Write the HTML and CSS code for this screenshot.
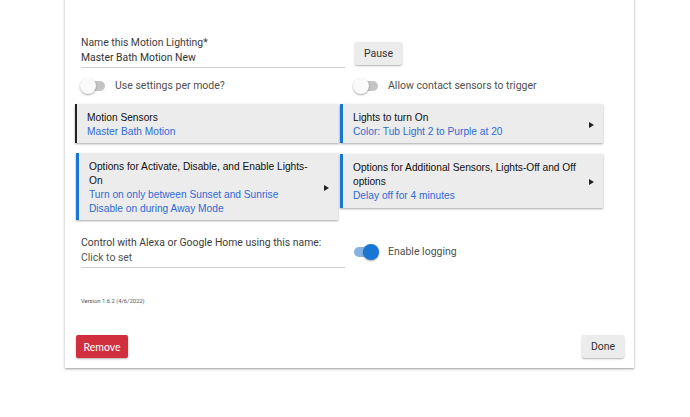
FILE: index.html
```html
<!DOCTYPE html>
<html>
<head>
<meta charset="utf-8">
<link rel="stylesheet" href="styles.css">
</head>
<body>
<div class="panel">
  <div class="row two">
    <div class="field">
      <div class="field-label">Name this Motion Lighting*</div>
      <div class="field-value">Master Bath Motion New</div>
    </div>
    <div class="right-col top">
      <button class="btn btn-grey btn-pause">Pause</button>
    </div>
  </div>

  <div class="row two toggles">
    <div class="toggle-line">
      <span class="switch"><span class="knob"></span></span>
      <span class="toggle-label">Use settings per mode?</span>
    </div>
    <div class="toggle-line">
      <span class="switch"><span class="knob"></span></span>
      <span class="toggle-label">Allow contact sensors to trigger</span>
    </div>
  </div>

  <div class="cards cards-1">
    <div class="tile tile-dark">
      <div class="tile-body">
        <div class="tile-title">Motion Sensors</div>
        <div class="tile-sub">Master Bath Motion</div>
      </div>
    </div>
    <div class="tile">
      <div class="tile-body">
        <div class="tile-title">Lights to turn On</div>
        <div class="tile-sub">Color: Tub Light 2 to Purple at 20</div>
      </div>
      <span class="arrow"></span>
    </div>
  </div>

  <div class="cards cards-2">
    <div class="tile tile-inset">
      <div class="tile-body">
        <div class="tile-title">Options for Activate, Disable, and Enable Lights-On</div>
        <div class="tile-sub">Turn on only between Sunset and Sunrise</div>
        <div class="tile-sub">Disable on during Away Mode</div>
      </div>
      <span class="arrow"></span>
    </div>
    <div class="tile tile-lower">
      <div class="tile-body">
        <div class="tile-title">Options for Additional Sensors, Lights-Off and Off options</div>
        <div class="tile-sub">Delay off for 4 minutes</div>
      </div>
      <span class="arrow"></span>
    </div>
  </div>

  <div class="row two alexa">
    <div class="field">
      <div class="field-label">Control with Alexa or Google Home using this name:</div>
      <div class="field-value placeholder">Click to set</div>
    </div>
    <div class="toggle-line">
      <span class="switch on"><span class="knob"></span></span>
      <span class="toggle-label">Enable logging</span>
    </div>
  </div>

  <div class="version">Version 1.6.2 (4/6/2022)</div>

  <div class="actions">
    <button class="btn btn-red">Remove</button>
    <button class="btn btn-grey btn-done">Done</button>
  </div>
</div>
</body>
</html>
```

FILE: styles.css
```css
html, body {
  margin: 0;
  padding: 0;
  background: #ffffff;
}

body {
  font-family: Roboto, "Liberation Sans", sans-serif;
  width: 690px;
  height: 417px;
  overflow: hidden;
}

.panel {
  margin-left: 65px;
  margin-top: -10px;
  width: 569px;
  box-sizing: border-box;
  padding: 45px 10px 10px 10px;
  background: #fff;
  box-shadow: 0 1px 3px rgba(0, 0, 0, 0.28), 0 1px 1px rgba(0, 0, 0, 0.12);
}

.row {
  padding-left: 6px;
}

.two {
  display: grid;
  grid-template-columns: 264px 1fr;
  column-gap: 9px;
}

.field {
  border-bottom: 1px solid #cfcfcf;
  padding-bottom: 1px;
}

.field-label {
  font-size: 10.4px;
  line-height: 15px;
  color: #3d3d3d;
}

.field-value {
  font-size: 10.4px;
  line-height: 16px;
  color: #333;
}

.field-value.placeholder {
  color: #555;
}

.right-col.top {
  align-self: start;
}

.btn {
  border: none;
  border-radius: 2px;
  font-family: Roboto, "Liberation Sans", sans-serif;
  font-size: 10.5px;
  height: 23px;
  padding: 0;
  cursor: pointer;
}

.btn-grey {
  background: #ececec;
  color: #333;
  box-shadow: 0 1px 2px rgba(0, 0, 0, 0.3);
}

.btn-pause {
  margin-top: 7px;
  margin-left: 1px;
  width: 47px;
}

.toggles {
  margin-top: 9px;
  height: 18px;
  align-items: center;
}

.toggle-line {
  display: flex;
  align-items: center;
  gap: 10px;
}

.switch {
  position: relative;
  display: inline-block;
  width: 24px;
  height: 10px;
  border-radius: 5px;
  background: #c4c4c4;
  flex: none;
}

.switch .knob {
  position: absolute;
  top: -3px;
  left: -1px;
  width: 16px;
  height: 16px;
  border-radius: 50%;
  background: #fafafa;
  box-shadow: 0 1px 2px rgba(0, 0, 0, 0.35);
}

.switch.on {
  background: #86b3e4;
}

.switch.on .knob {
  left: 9px;
  background: #1976d2;
}

.toggle-label {
  font-size: 10.5px;
  color: #505050;
  line-height: 14px;
}

.cards {
  display: grid;
  grid-template-columns: 264px 263px;
  column-gap: 1px;
  align-items: start;
}

.cards-1 {
  margin-top: 9px;
}

.cards-2 {
  margin-top: 10px;
}

.tile {
  display: flex;
  align-items: center;
  background: #ececec;
  border-left: 3px solid #1976d2;
  box-shadow: 0 1px 2px rgba(0, 0, 0, 0.35);
  padding: 7px 9px 5px 10px;
  font-family: "Liberation Sans", Arial, sans-serif;
  font-size: 10.2px;
  line-height: 13.7px;
}

.tile-dark {
  border-left: 2px solid #222;
  padding-left: 10px;
}

.tile-inset {
  margin-left: 1px;
  margin-right: 1px;
}

.tile-lower {
  margin-top: 1px;
}

.tile-body {
  flex: 1;
  min-width: 0;
}

.tile-title {
  color: #111;
}

.tile-sub {
  color: #2f6ad4;
}

.arrow {
  flex: none;
  width: 0;
  height: 0;
  margin-left: 6px;
  border-left: 5px solid #222;
  border-top: 3px solid transparent;
  border-bottom: 3px solid transparent;
}

.alexa {
  margin-top: 15px;
  align-items: center;
}

.version {
  margin-top: 29px;
  padding-left: 6px;
  font-size: 5.8px;
  line-height: 8px;
  color: #555;
}

.actions {
  margin-top: 30px;
  display: flex;
  justify-content: space-between;
  padding-left: 1px;
}

.btn-red {
  width: 52px;
  background: #d22f3e;
  color: #fff;
  font-family: Lato, Roboto, sans-serif;
  box-shadow: 0 1px 2px rgba(0, 0, 0, 0.3);
}

.btn-done {
  width: 42px;
}
```
